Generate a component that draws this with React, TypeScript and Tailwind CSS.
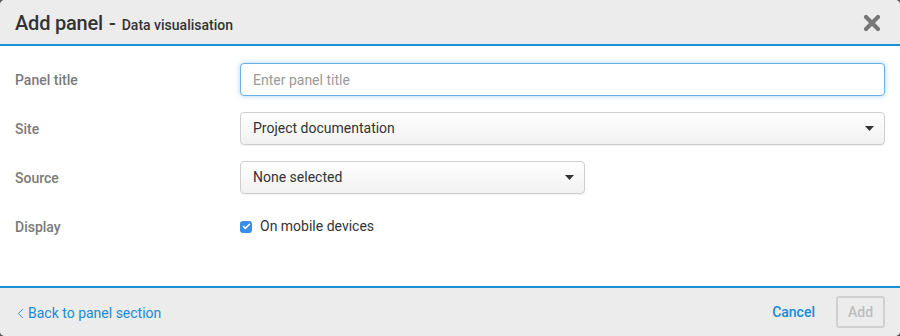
import { Check, ChevronLeft } from "lucide-react";

const labelClass = "w-[225px] shrink-0 text-[14px] font-medium text-[#7a7a7a]";

const Caret = () => (
  <svg width="9" height="5" viewBox="0 0 9 5" className="shrink-0">
    <path d="M0 0h9L4.5 5z" fill="#333" />
  </svg>
);

const SelectBox = ({ value, width }: { value: string; width: string }) => (
  <div
    className={`${width} h-[33px] flex items-center justify-between pl-3 pr-[10px] rounded-[4px] border border-[#cfcfcf] bg-gradient-to-b from-white to-[#f1f1f1] shadow-[0_1px_1px_rgba(0,0,0,0.06)] text-[14px] text-[#333]`}
  >
    <span>{value}</span>
    <Caret />
  </div>
);

export default function App() {
  return (
    <div className="w-[900px] h-[336px] bg-[#5a5a5a] font-['Roboto',sans-serif]">
      <div className="w-full h-full flex flex-col rounded-[5px] overflow-hidden bg-white">
        {/* header */}
        <div className="h-[46px] shrink-0 flex items-center justify-between pl-[15px] pr-[19px] bg-[#ececec] border-b-2 border-[#1592d6]">
          <div className="flex items-baseline text-[#333] pt-[1px]">
            <span className="text-[20px] font-medium tracking-[-0.2px]">Add panel</span>
            <span className="text-[20px] font-medium ml-[6px]">-</span>
            <span className="text-[14px] font-medium ml-[6px]">Data visualisation</span>
          </div>
          <svg width="18" height="18" viewBox="0 0 18 18" className="mt-[1px]">
            <path d="M3 3L15 15M15 3L3 15" stroke="#777" strokeWidth="4.2" strokeLinecap="round" />
          </svg>
        </div>

        {/* body */}
        <div className="flex-1 flex flex-col pl-[15px] pr-[15px] pt-[17px] gap-[16px]">
          <div className="flex items-center">
            <div className={`${labelClass} pt-[1px]`}>Panel title</div>
            <input
              className="flex-1 h-[33px] px-3 rounded-[4px] border border-[#6aaee8] bg-white text-[14px] text-[#333] placeholder:text-[#9a9a9a] shadow-[0_0_5px_rgba(66,153,225,0.45)] outline-none"
              placeholder="Enter panel title"
            />
          </div>
          <div className="flex items-center">
            <div className={`${labelClass} pt-[1px]`}>Site</div>
            <SelectBox value="Project documentation" width="flex-1" />
          </div>
          <div className="flex items-center">
            <div className={`${labelClass} pt-[1px]`}>Source</div>
            <SelectBox value="None selected" width="w-[345px]" />
          </div>
          <div className="flex items-center h-[33px]">
            <div className={`${labelClass} pt-[1px]`}>Display</div>
            <div className="flex items-center gap-[8px] text-[14px] text-[#333]">
              <span className="w-[12px] h-[12px] rounded-[3px] bg-[#3b8ee8] flex items-center justify-center">
                <Check size={9} strokeWidth={4} color="white" />
              </span>
              <span>On mobile devices</span>
            </div>
          </div>
        </div>

        {/* footer */}
        <div className="h-[50px] shrink-0 flex items-center justify-between pl-[15px] pr-[15px] bg-[#ececec] border-t-2 border-[#1592d6]">
          <a className="flex items-center text-[14px] text-[#1a8ad4] mt-[2px]">
            <ChevronLeft size={17} strokeWidth={1.3} className="-ml-[3px] -mr-[1px]" />
            Back to panel section
          </a>
          <div className="flex items-center gap-[21px]">
            <span className="text-[14px] font-medium text-[#1a8ad4]">Cancel</span>
            <button className="w-[49px] h-[32px] rounded-[3px] border-2 border-[#d0d0d0] text-[14px] font-medium text-[#bdbdbd]">
              Add
            </button>
          </div>
        </div>
      </div>
    </div>
  );
}
